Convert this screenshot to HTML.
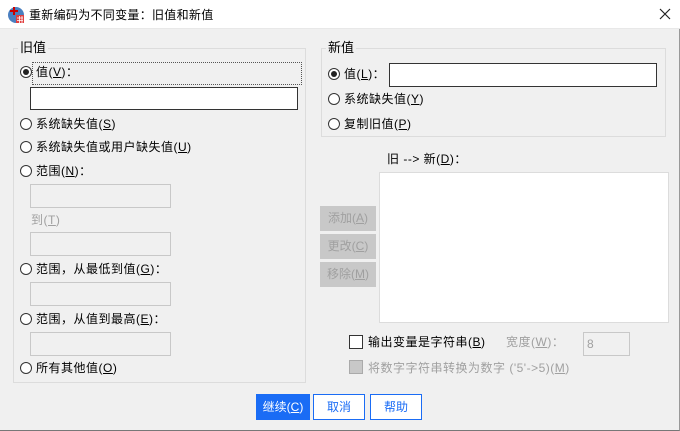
<!DOCTYPE html>
<html><head><meta charset="utf-8"><style>
*{margin:0;padding:0;box-sizing:border-box}
body{width:680px;height:431px;background:#f0f0f0;font-family:"Liberation Sans","Microsoft YaHei","Noto Sans CJK SC",sans-serif;font-size:12px;color:#000;position:relative;overflow:hidden;border-right:1px solid #999;border-bottom:1px solid #777}
.a{position:absolute;white-space:nowrap;line-height:14px;letter-spacing:0.5px}
.t{position:absolute;left:0;top:0;width:680px;height:29px;background:#fff;border-bottom:1px solid #e8e8e8}
.g{position:absolute;border:1px solid #dcdcdc}
.lg{position:absolute;background:#f0f0f0;padding:0 2px;line-height:14px}
.r{position:absolute;width:12px;height:12px;border:1px solid #333;border-radius:50%;background:#fff}
.r.on::after{content:"";position:absolute;left:2px;top:2px;width:6px;height:6px;border-radius:50%;background:#222}
.in{position:absolute;background:#fff;border:1px solid #333}
.dis{position:absolute;border:1px solid #c8c8c8;background:#f0f0f0}
.gr{color:#a0a0a0}
u{text-decoration:underline}
.bt{position:absolute;left:320px;width:56px;height:25px;background:#c8c8c8;color:#a0a0a0;text-align:center;line-height:25px}
.b{position:absolute;top:394px;height:26px;border:1px solid #1a6cf5;background:#fff;color:#1a6cf5;text-align:center;line-height:24px}
</style></head><body>
<div class="t"></div>
<svg style="position:absolute;left:7px;top:6px" width="18" height="18" viewBox="0 0 18 18"><circle cx="9" cy="9" r="8" fill="#4a7fc0"/><rect x="9" y="9" width="8" height="8" fill="#e04040"/><path d="M3 5h8M7 1v8" stroke="#c00" stroke-width="2"/><path d="M10 12h6M10 14.5h6M12.5 10v7M15 10v7" stroke="#fff" stroke-width=".8"/></svg>
<div class="a" style="left:29px;top:8px;font-size:12px;letter-spacing:0.3px">重新编码为不同变量：旧值和新值</div>
<svg style="position:absolute;left:659px;top:8px" width="12" height="12"><path d="M1 1L11 11M11 1L1 11" stroke="#222" stroke-width="1.2"/></svg>

<div class="g" style="left:13px;top:48px;width:293px;height:335px"></div>
<div class="lg" style="left:18px;top:41px;font-size:13px">旧值</div>
<div style="position:absolute;left:32px;top:62px;width:270px;height:23px;border:1px dotted #555"></div>
<div class="r on" style="left:20px;top:66px"></div><div class="a" style="left:36px;top:65px">值(<u>V</u>)：</div>
<div class="in" style="left:30px;top:87px;width:268px;height:23px"></div>
<div class="r" style="left:20px;top:118px"></div><div class="a" style="left:36px;top:117px">系统缺失值(<u>S</u>)</div>
<div class="r" style="left:20px;top:141px"></div><div class="a" style="left:36px;top:140px">系统缺失值或用户缺失值(<u>U</u>)</div>
<div class="r" style="left:20px;top:165px"></div><div class="a" style="left:36px;top:164px">范围(<u>N</u>)：</div>
<div class="dis" style="left:30px;top:184px;width:141px;height:24px"></div>
<div class="a gr" style="left:31px;top:213px">到(<u>T</u>)</div>
<div class="dis" style="left:30px;top:232px;width:141px;height:24px"></div>
<div class="r" style="left:20px;top:263px"></div><div class="a" style="left:36px;top:262px">范围，从最低到值(<u>G</u>)：</div>
<div class="dis" style="left:30px;top:282px;width:141px;height:24px"></div>
<div class="r" style="left:20px;top:313px"></div><div class="a" style="left:36px;top:312px">范围，从值到最高(<u>E</u>)：</div>
<div class="dis" style="left:30px;top:332px;width:141px;height:24px"></div>
<div class="r" style="left:20px;top:362px"></div><div class="a" style="left:36px;top:361px">所有其他值(<u>O</u>)</div>

<div class="g" style="left:321px;top:48px;width:345px;height:89px"></div>
<div class="lg" style="left:326px;top:41px;font-size:13px">新值</div>
<div class="r on" style="left:328px;top:68px"></div><div class="a" style="left:344px;top:67px">值(<u>L</u>)：</div>
<div class="in" style="left:389px;top:63px;width:268px;height:24px"></div>
<div class="r" style="left:328px;top:93px"></div><div class="a" style="left:344px;top:92px">系统缺失值(<u>Y</u>)</div>
<div class="r" style="left:328px;top:118px"></div><div class="a" style="left:344px;top:117px">复制旧值(<u>P</u>)</div>

<div class="a" style="left:387px;top:152px">旧 --&gt; 新(<u>D</u>)：</div>
<div style="position:absolute;left:379px;top:172px;width:290px;height:151px;background:#fff;border:1px solid #dcdcdc"></div>
<div class="bt" style="top:206px">添加(<u>A</u>)</div>
<div class="bt" style="top:234px">更改(<u>C</u>)</div>
<div class="bt" style="top:262px">移除(<u>M</u>)</div>

<div style="position:absolute;left:349px;top:335px;width:14px;height:14px;border:1px solid #333;background:#fff"></div>
<div class="a" style="left:368px;top:335px">输出变量是字符串(<u>B</u>)</div>
<div class="a gr" style="left:506px;top:335px">宽度(<u>W</u>)：</div>
<div class="dis" style="left:583px;top:332px;width:47px;height:24px"></div>
<div class="a gr" style="left:587px;top:337px">8</div>
<div style="position:absolute;left:349px;top:360px;width:14px;height:14px;border:1px solid #aaa;background:#c8c8c8"></div>
<div class="a gr" style="left:368px;top:361px">将数字字符串转换为数字 ('5'-&gt;5)(<u>M</u>)</div>

<div class="b" style="left:256px;width:54px;background:#1a6cf5;color:#fff">继续(<u>C</u>)</div>
<div class="b" style="left:313px;width:52px">取消</div>
<div class="b" style="left:370px;width:52px">帮助</div>
</body></html>
